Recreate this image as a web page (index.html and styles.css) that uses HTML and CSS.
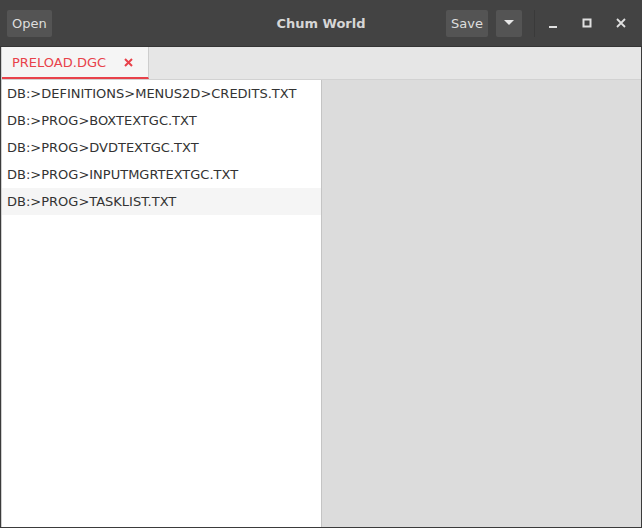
FILE: index.html
```html
<!DOCTYPE html>
<html>
<head>
<meta charset="utf-8">
<link rel="stylesheet" href="styles.css">
</head>
<body>
<div class="window">
  <header class="titlebar">
    <div class="left">
      <button class="btn">Open</button>
    </div>
    <div class="title">Chum World</div>
    <div class="right">
      <button class="btn">Save</button>
      <button class="btn menu-btn" aria-label="menu">
        <svg width="10" height="6" viewBox="0 0 10 6"><path d="M0 0h10L5 5z" fill="#e8e8e8"/></svg>
      </button>
      <span class="sep"></span>
      <button class="wbtn" aria-label="minimize">
        <svg width="10" height="10" viewBox="0 0 10 10"><rect x="1" y="8" width="8" height="2" fill="#e0e0e0"/></svg>
      </button>
      <button class="wbtn" aria-label="maximize">
        <svg width="10" height="10" viewBox="0 0 10 10"><rect x="1.5" y="1.5" width="7" height="7" fill="none" stroke="#e0e0e0" stroke-width="2"/></svg>
      </button>
      <button class="wbtn" aria-label="close">
        <svg width="10" height="10" viewBox="0 0 10 10"><path d="M1 1L9 9M9 1L1 9" stroke="#e0e0e0" stroke-width="1.8"/></svg>
      </button>
    </div>
  </header>
  <div class="content">
    <div class="tabbar">
      <div class="tab active">
        <span class="tab-label">PRELOAD.DGC</span>
        <svg class="tab-close" width="9" height="9" viewBox="0 0 9 9"><path d="M1 1L8 8M8 1L1 8" stroke="#e8414a" stroke-width="2"/></svg>
      </div>
    </div>
    <div class="panes">
      <ul class="list">
        <li>DB:&gt;DEFINITIONS&gt;MENUS2D&gt;CREDITS.TXT</li>
        <li>DB:&gt;PROG&gt;BOXTEXTGC.TXT</li>
        <li>DB:&gt;PROG&gt;DVDTEXTGC.TXT</li>
        <li>DB:&gt;PROG&gt;INPUTMGRTEXTGC.TXT</li>
        <li class="hover">DB:&gt;PROG&gt;TASKLIST.TXT</li>
      </ul>
      <div class="viewer"></div>
    </div>
  </div>
</div>
</body>
</html>
```
FILE: styles.css
```css
html, body {
  margin: 0;
  padding: 0;
  background: #3b3b3b;
}
.window {
  width: 642px;
  height: 528px;
  display: flex;
  flex-direction: column;
  font-family: "DejaVu Sans", sans-serif;
  background: #3b3b3b;
}
.titlebar {
  height: 47px;
  flex: none;
  background: #434343;
  border-bottom: 1px solid #353535;
  display: flex;
  align-items: center;
  position: relative;
  padding: 0 4px 0 7px;
  box-sizing: border-box;
}
.left, .right {
  display: flex;
  align-items: center;
}
.right { margin-left: auto; }
.title {
  position: absolute;
  left: 0;
  right: 0;
  text-align: center;
  font-weight: bold;
  font-size: 13px;
  color: #d6d6d6;
  pointer-events: none;
}
.btn {
  height: 27px;
  background: #545454;
  border: none;
  border-radius: 2px;
  color: #dedede;
  font-family: inherit;
  font-size: 13px;
  padding: 0 5px;
  display: flex;
  align-items: center;
  justify-content: center;
}
.menu-btn {
  width: 26px;
  margin-left: 8px;
  padding: 0;
}
.sep {
  width: 1px;
  height: 27px;
  background: #3a3a3a;
  margin: 0 1px 0 12px;
}
.wbtn {
  width: 34px;
  height: 27px;
  background: none;
  border: none;
  padding: 0;
  display: flex;
  align-items: center;
  justify-content: center;
}
.content {
  flex: 1;
  display: flex;
  flex-direction: column;
  margin: 0 1px 1px 1px;
  background: #fff;
  border-left: 1px solid #cfcfcf;
  min-height: 0;
}
.tabbar {
  height: 33px;
  flex: none;
  background: #e6e6e6;
  border-bottom: 1px solid #d2d2d2;
  display: flex;
  box-sizing: border-box;
}
.tab {
  width: 147px;
  box-sizing: border-box;
  background: #f5f5f5;
  border-right: 1px solid #cdcdcd;
  border-bottom: 2px solid #e8414a;
  display: flex;
  align-items: center;
  padding: 0 10px 0 10px;
  color: #e8414a;
  font-size: 13px;
}
.tab-label { flex: 1; }
.tab-close { margin-right: 5px; }
.panes {
  flex: 1;
  display: flex;
  min-height: 0;
}
.list {
  list-style: none;
  margin: 0;
  padding: 0;
  width: 319px;
  flex: none;
  background: #fff;
  border-right: 1px solid #c4c4c4;
}
.list li {
  height: 27px;
  line-height: 27px;
  padding-left: 5px;
  font-size: 13px;
  color: #333;
  white-space: nowrap;
}
.list li.hover { background: #f5f5f5; }
.viewer {
  flex: 1;
  background: #dcdcdc;
}
```
